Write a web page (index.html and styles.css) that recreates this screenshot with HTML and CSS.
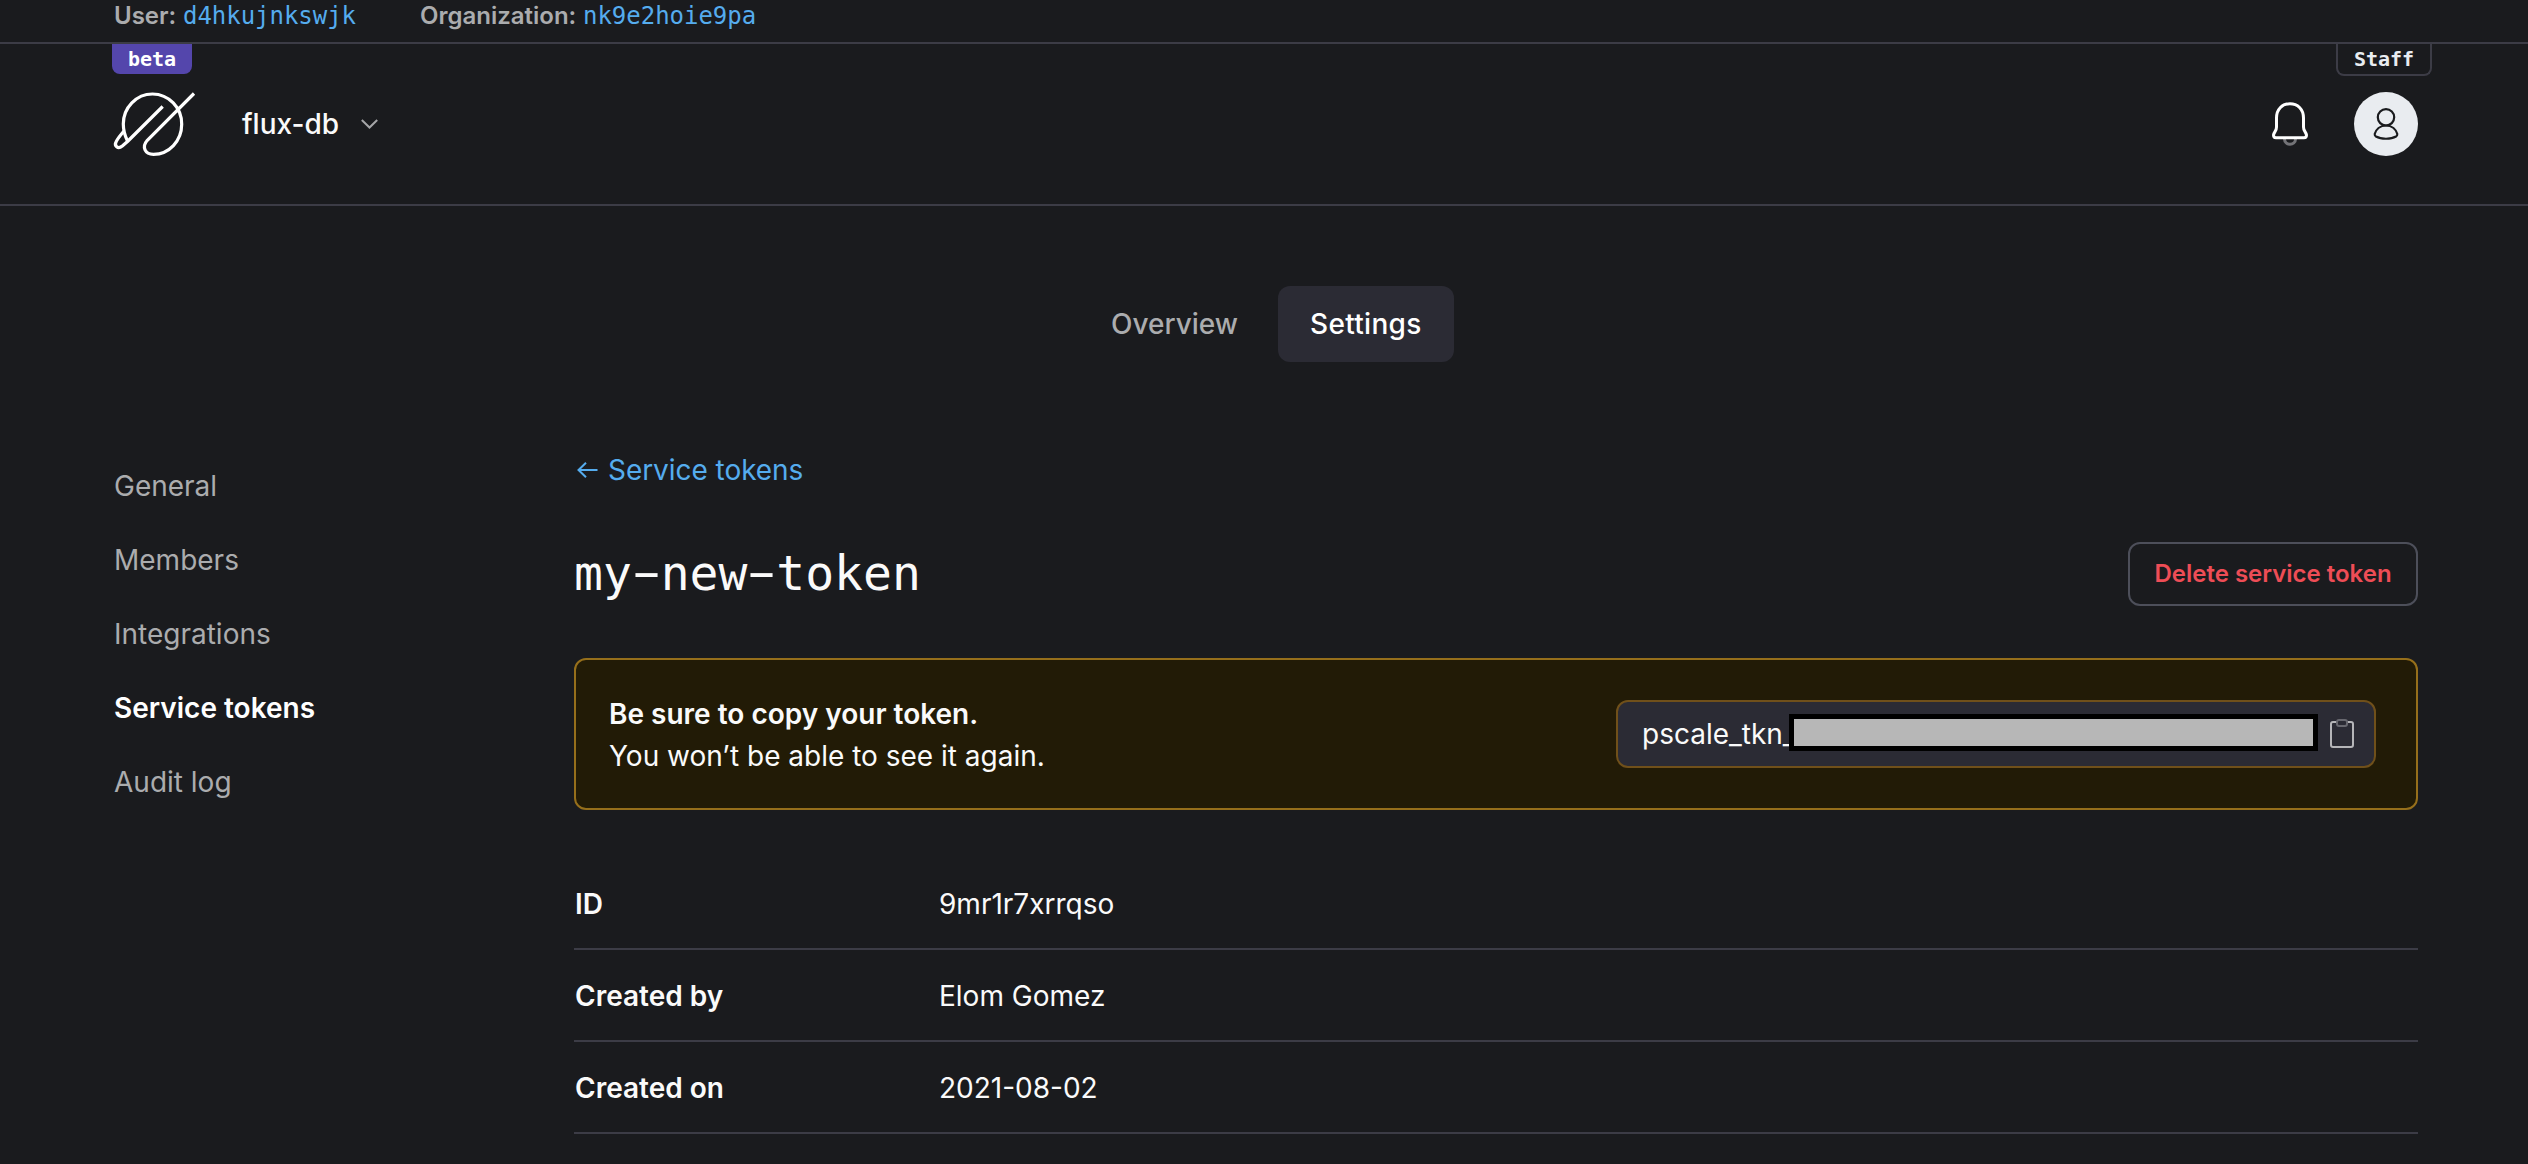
FILE: index.html
```html
<!DOCTYPE html>
<html lang="en">
<head>
<meta charset="utf-8">
<title>Service tokens</title>
<link rel="stylesheet" href="styles.css">
</head>
<body>
<div class="staffbar">
  <div class="staff-item"><b>User:</b> <a class="mono">d4hkujnkswjk</a></div>
  <div class="staff-item"><b>Organization:</b> <a class="mono">nk9e2hoie9pa</a></div>
</div>
<header class="header">
  <div class="left">
    <span class="tag beta">beta</span>
    <div class="brand">
      <svg class="logo" width="84" height="64" viewBox="0 0 84 64" fill="none" stroke="#fff" stroke-width="3.2" stroke-linejoin="round"><path d="M15.500 49C12.500 43 11.300 38 11.300 32A29.300 30 0 0 1 40.500 2A29.300 30 0 0 1 69.700 32.300C69.700 49 57 62.300 41.500 62.300C33 62.300 29.500 55 35.300 48.300L82 1.500"/><path d="M50.700 14.500L15.500 49.500L10.300 54C6 57.500 1.500 54 4.500 49C6.500 45.500 9 42.500 12 39"/></svg>
      <span class="org">flux-db</span>
      <svg class="chev" width="17" height="10" viewBox="0 0 17 10" fill="none" stroke="#a5a6a8" stroke-width="2"><path d="M.8 1l7.700 7.500L16.200 1"/></svg>
    </div>
  </div>
  <div class="right">
    <span class="tag staff">Staff</span>
    <div class="tools">
      <svg width="36" height="44" viewBox="0 0 36 44" fill="none" stroke="#fff" stroke-width="3"><path stroke="#737377" d="M12.500 37c0 7 11 7 11 0"/><path stroke-linejoin="round" d="M4 35.700Q1.500 35.700 1.500 33C2.500 29 4.500 29 4.500 25V16C4.500 7 10.500 1.700 18 1.700S31.500 7 31.500 16V25C31.500 29 33.500 29 34.500 33Q34.500 35.700 32 35.700Z"/></svg>
      <span class="avatar"><svg width="26" height="34" viewBox="0 0 26 34" fill="none" stroke="#1a1b1e" stroke-width="2.200"><circle cx="13" cy="10.300" r="8.200"/><path stroke-linejoin="round" d="M13 18.500C7 18.500 3 22.500 1.700 27Q1.500 28.500 3 29.500C8 32.500 18 32.500 23 29.500Q24.500 28.500 24.300 27C23 22.500 19 18.500 13 18.500Z"/></svg></span>
    </div>
  </div>
</header>
<nav class="tabs"><a class="tab">Overview</a><a class="tab active">Settings</a></nav>
<div class="layout">
  <nav class="side"><a>General</a><a>Members</a><a>Integrations</a><a class="current">Service tokens</a><a>Audit log</a></nav>
  <main class="main">
    <a class="back"><svg width="21" height="16" viewBox="0 0 21 16" fill="none" stroke="#55acee" stroke-width="2"><path d="M20.500 8H1.500M9 .8L1.500 8L9 15.200"/></svg>Service tokens</a>
    <div class="title"><h1>my<span class="dash">-</span>new<span class="dash">-</span>token</h1><button class="delete">Delete service token</button></div>
    <section class="notice">
      <div class="notice-text"><strong>Be sure to copy your token.</strong><br>You won’t be able to see it again.</div>
      <div class="token"><span class="token-value">pscale_tkn_</span><i class="redacted"></i>
        <svg class="copy" width="24" height="29" viewBox="0 0 24 29" fill="none" stroke-width="2"><path stroke="#b5b5b8" d="M7 3H3Q1 3 1 5V26Q1 28 3 28H21Q23 28 23 26V5Q23 3 21 3H17"/><rect stroke="#68686f" x="7" y="1" width="10" height="6" rx="2"/></svg>
      </div>
    </section>
    <dl class="details">
      <div><dt>ID</dt><dd>9mr1r7xrrqso</dd></div>
      <div><dt>Created by</dt><dd>Elom Gomez</dd></div>
      <div><dt>Created on</dt><dd>2021-08-02</dd></div>
    </dl>
  </main>
</div>
</body>
</html>
```
FILE: styles.css
```css
* { box-sizing: border-box; }
body { margin: 0; height: 1164px; overflow: hidden; background: #1a1b1e; color: #fafafa; font: 28px/42px Inter, "Liberation Sans", sans-serif; }
svg { display: block; flex: none; }
.mono { font-family: "DejaVu Sans Mono", monospace; color: #55acee; letter-spacing: -.03px; }
.staffbar { height: 44px; border-bottom: 2px solid #3c3c46; padding: 0 114px; display: flex; gap: 64px; font-size: 24px; line-height: 32px; color: #abacae; }
.staff-item { white-space: nowrap; }
.staff-item b { font-weight: 600; }
.header { height: 162px; border-bottom: 2px solid #3c3c46; padding: 0 110px 0 112px; display: flex; justify-content: space-between; }
.tag { display: block; width: 80px; height: 30px; font: bold 20px/30px "DejaVu Sans Mono", monospace; text-align: center; border-radius: 0 0 8px 8px; }
.beta { background: #5446ac; color: #fff; }
.brand { display: flex; align-items: center; height: 64px; margin-top: 18px; }
.org { margin-left: 46px; font-weight: 500; }
.chev { margin-left: 22px; }
.right { width: 150px; display: flex; flex-direction: column; align-items: flex-end; }
.staff { width: 96px; height: 32px; margin-right: -14px; border: 2px solid #3c3c46; border-top: 0; color: #e9ecf0; }
.tools { display: flex; align-items: center; gap: 46px; margin-top: 16px; }
.avatar { width: 64px; height: 64px; border-radius: 50%; background: #e9ecf0; display: flex; align-items: center; justify-content: center; }
.tabs { margin-top: 80px; padding-left: 5px; display: flex; justify-content: center; gap: 8px; }
.tab { height: 76px; padding: 0 32px; line-height: 76px; border-radius: 12px; font-weight: 500; color: #abacae; }
.tab.active { width: 176px; letter-spacing: .3px; background: #2b2b34; color: #fff; }
.layout { padding: 0 110px 0 114px; display: flex; }
.side { width: 460px; margin-top: 87px; display: flex; flex-direction: column; color: #abacae; }
.side a { height: 74px; line-height: 74px; }
.side .current { color: #fff; font-weight: 600; }
.main { flex: 1; }
.back { margin-top: 87px; height: 42px; display: flex; align-items: center; gap: 10px; padding-left: 3px; color: #55acee; letter-spacing: -.05px; }
.title { margin-top: 51px; height: 64px; display: flex; align-items: center; justify-content: space-between; }
h1 { margin: 0; padding-bottom: 2px; font: 48px/62px "DejaVu Sans Mono", monospace; }
.dash { display: inline-block; transform: translateY(-2px) scaleX(1.8); }
.delete { width: 290px; height: 64px; padding: 0; border: 2px solid #4d4f5a; border-radius: 12px; background: none; color: #ee4d56; font: 600 24px/60px Inter, sans-serif; }
.notice { margin-top: 52px; height: 152px; border: 2px solid #966f1b; border-radius: 12px; background: #221b06; padding: 0 40px 0 33px; display: flex; align-items: center; justify-content: space-between; }
.notice-text { padding-top: 2px; }
.notice strong, dt { font-weight: 600; }
.token { width: 760px; height: 68px; border: 2px solid #70501a; border-radius: 12px; background: #2b2b34; display: flex; align-items: center; padding-left: 24px; white-space: nowrap; }
.token-value { width: 147px; }
.redacted { flex: none; width: 529px; height: 37px; margin: 0 12px 3px 0; border: 5px solid #000; background: #b7b7b7; }
.copy { margin-bottom: 1px; }
.details { margin: 48px 0 0; }
.details div { display: flex; height: 92px; line-height: 92px; border-bottom: 2px solid #3c3c46; }
dt { width: 365px; padding-left: 1px; }
dd { margin: 0; }
```
